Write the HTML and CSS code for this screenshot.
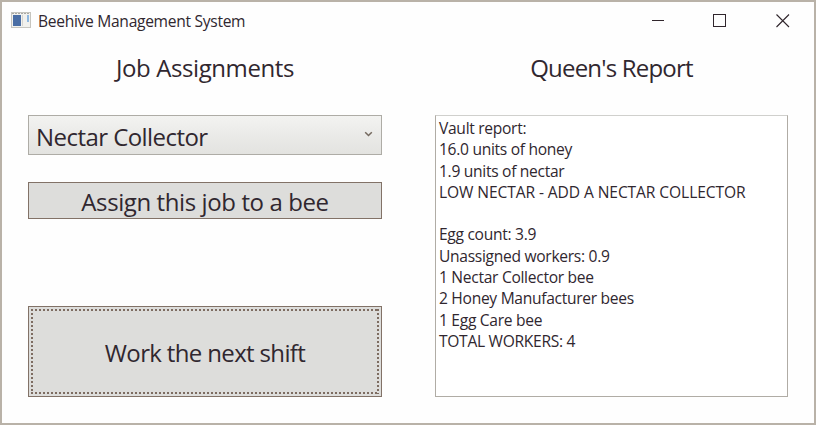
FILE: index.html
```html
<!DOCTYPE html>
<html lang="en">
<head>
<meta charset="utf-8">
<title>Beehive Management System</title>
<link rel="stylesheet" href="styles.css">
</head>
<body>
<div class="window">
  <header class="titlebar">
    <svg class="app-icon" width="20" height="17" viewBox="0 0 20 17">
      <rect x=".5" y=".5" width="19" height="15" fill="#f1f1ee" stroke="#c6c5bf"/>
      <path d="M1 1.500h18" stroke="#aaa9a4" stroke-dasharray="2 1"/>
      <rect x="2" y="3" width="8" height="11" fill="#4a6ea5"/>
      <path d="M11.500 3v11" stroke="#d5d4cf"/>
      <rect x="16" y="3" width="2" height="7" fill="#8fb8e0"/>
    </svg>
    <span class="title">Beehive Management System</span>
    <svg class="controls" width="140" height="14" viewBox="0 0 140 14" fill="none" stroke="#30262c">
      <path d="M1 6.500h12"/>
      <rect x="62.500" y=".5" width="12" height="12"/>
      <path d="M125.500 .5l12.500 12.500M138 .5L125.500 13" stroke-width="1.100"/>
    </svg>
  </header>
  <main class="content">
    <section class="jobs">
      <h2 class="heading jobs-heading">Job Assignments</h2>
      <div class="combo"><span class="combo-text">Nectar Collector</span>
        <svg width="10" height="7" viewBox="0 0 10 7" fill="none" stroke="#74695f" stroke-width="1.500"><path d="M2.200 2.200L5.500 5.500L8.800 2.200"/></svg>
      </div>
      <button class="button assign"><span class="assign-text">Assign this job to a bee</span></button>
      <button class="button work"><span class="focus"><span class="work-text">Work the next shift</span></span></button>
    </section>
    <section class="report">
      <h2 class="heading report-heading">Queen's Report</h2>
      <div class="report-box">Vault report:
16.0 units of honey
1.9 units of nectar
<span class="caps">LOW NECTAR - ADD A NECTAR COLLECTOR</span>

Egg count: 3.9
Unassigned workers: 0.9
1 Nectar Collector bee
2 Honey Manufacturer bees
1 Egg Care bee
TOTAL WORKERS: 4</div>
    </section>
  </main>
</div>
</body>
</html>
```
FILE: styles.css
```css
* { box-sizing: border-box; }
body { margin: 0; background: #fff; font-family: "Open Sans", "Noto Sans", sans-serif; color: #30272f; }
.window { width: 816px; height: 425px; border: 2px solid #b9b2a8; background: #fefefe; }
.titlebar { display: flex; align-items: center; height: 37px; padding: 0 23px 0 9px; }
.app-icon { flex: none; }
.title { margin-left: 7px; font-size: 15.600px; letter-spacing: -0.3px; white-space: nowrap; }
.controls { margin-left: auto; }
.content { display: grid; grid-template-columns: 354px 353px; column-gap: 53px; padding-left: 26px; }
.jobs, .report { display: flex; flex-direction: column; }
.heading { margin: 0; height: 76px; padding-top: 11px; font-size: 24px; line-height: 36px; font-weight: 400; text-align: center; letter-spacing: -0.4px; white-space: nowrap; }
.report-heading { letter-spacing: -0.8px; }
.combo { display: flex; align-items: center; justify-content: space-between; height: 40px; padding: 3px 8px 0 7px; border: 1px solid #aeaca6; background: linear-gradient(#f3f3f1, #ebebe9 45%, #e3e3e0); font-size: 24px; line-height: 36px; letter-spacing: -0.55px; }
.combo svg { margin-top: -6px; }
.button { display: flex; align-items: center; justify-content: center; width: 354px; margin: 0; padding: 0; border: 1px solid #827267; border-radius: 0; background: #dddddb; color: inherit; font: 24px/34px "Open Sans", "Noto Sans", sans-serif; letter-spacing: -0.4px; white-space: nowrap; }
.assign { height: 37px; margin-top: 27px; padding-top: 3px; }
.work { height: 91px; margin-top: 87px; padding: 2px; letter-spacing: -0.65px; }
.focus { display: flex; align-items: center; justify-content: center; width: 100%; height: 100%; padding-top: 3px;
  background:
    repeating-linear-gradient(90deg, #7d6c61 0 2px, transparent 2px 4px) 0 0 / 100% 2px no-repeat,
    repeating-linear-gradient(90deg, #7d6c61 0 2px, transparent 2px 4px) 0 100% / 100% 2px no-repeat,
    repeating-linear-gradient(#7d6c61 0 2px, transparent 2px 4px) 0 0 / 2px 100% no-repeat,
    repeating-linear-gradient(#7d6c61 0 2px, transparent 2px 4px) 100% 0 / 2px 100% no-repeat; }
.report-box { height: 282px; padding: 2px 3px 0; border: 1px solid #b0aca5; border-top-color: #d0d0cd; background: #fff; font-size: 15.600px; line-height: 21.300px; letter-spacing: -0.3px; white-space: pre; }
.caps { letter-spacing: -0.1px; }
```
